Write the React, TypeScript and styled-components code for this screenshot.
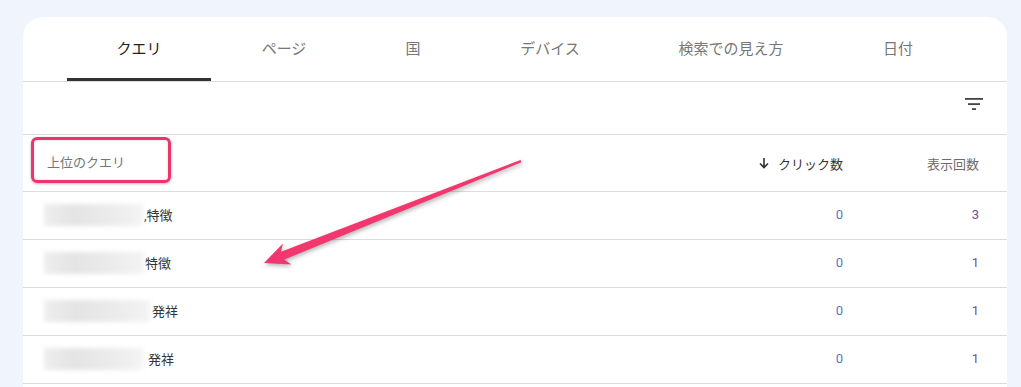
import React from "react";
import styled, { createGlobalStyle } from "styled-components";

const Global = createGlobalStyle`
  html, body { margin: 0; padding: 0; }
  body {
    background: #f0f4fc;
    font-family: Roboto, "Noto Sans CJK JP", sans-serif;
    overflow: hidden;
    width: 1021px;
    height: 387px;
  }
`;

const Page = styled.div`
  position: relative;
  width: 1021px;
  height: 387px;
  padding: 17px 0 0 23px;
  box-sizing: border-box;
  overflow: hidden;
`;

const Card = styled.div`
  width: 984px;
  height: 400px;
  background: #fff;
  border-radius: 20px 20px 0 0;
  display: flex;
  flex-direction: column;
`;

const Tabs = styled.div`
  display: flex;
  height: 65px;
  flex: none;
  padding-left: 44px;
  border-bottom: 1px solid #dadce0;
  box-sizing: border-box;
`;

const Tab = styled.div<{ $w: number; $active?: boolean }>`
  width: ${(p) => p.$w}px;
  display: flex;
  align-items: center;
  justify-content: center;
  font-size: 15px;
  color: ${(p) => (p.$active ? "#202124" : "#777")};
  position: relative;
  padding-bottom: 3px;
  box-sizing: border-box;
  &::after {
    content: "";
    display: ${(p) => (p.$active ? "block" : "none")};
    position: absolute;
    left: 0;
    right: 0;
    bottom: 0;
    height: 3px;
    background: #333;
  }
`;

const Toolbar = styled.div`
  height: 53px;
  flex: none;
  display: flex;
  align-items: flex-start;
  justify-content: flex-end;
  padding: 15px 23px 0 0;
  border-bottom: 1px solid #dadce0;
  box-sizing: border-box;
`;

const Row = styled.div<{ $h: number }>`
  display: grid;
  flex: none;
  grid-template-columns: 1fr 140px 136px;
  align-items: center;
  height: ${(p) => p.$h}px;
  padding: 0 28px 0 21px;
  border-bottom: 1px solid #dadce0;
  box-sizing: border-box;
  font-size: 13px;
  color: #333;
`;

const HeadLabel = styled.span`
  position: relative;
  margin-left: 3px;
  color: #757575;
  font-size: 13px;
  line-height: 18px;
  justify-self: start;
`;

const Annotation = styled.span`
  position: absolute;
  left: -16px;
  top: -17px;
  width: 140px;
  height: 46px;
  box-sizing: border-box;
  border: 3px solid #ee346c;
  border-radius: 6px;
  box-shadow: 0 1px 3px rgba(0, 0, 0, 0.25), inset 0 0 3px rgba(0, 0, 0, 0.15);
`;

const HeadCell = styled.span<{ $dark?: boolean }>`
  color: ${(p) => (p.$dark ? "#333" : "#6b6b6b")};
  font-size: 13px;
  display: flex;
  justify-content: flex-end;
  align-items: center;
  gap: 9px;
`;

const QueryCell = styled.div`
  display: flex;
  align-items: center;
  padding-bottom: 2px;
`;

const Blur = styled.div<{ $w: number; $gap: number }>`
  width: ${(p) => p.$w}px;
  margin-right: ${(p) => p.$gap}px;
  height: 22px;
  background: linear-gradient(90deg, #eeeeee, #e4e4e4 30%, #ececec 70%, #f4f4f4);
  filter: blur(2px);
`;

const Num = styled.span<{ $purple?: boolean }>`
  text-align: right;
  font-size: 13px;
  padding-bottom: 2px;
  color: ${(p) => (p.$purple ? "#7d4a99" : "#4a80c4")};
`;

const Overlay = styled.svg`
  position: absolute;
  left: 0;
  top: 0;
  pointer-events: none;
  filter: drop-shadow(1px 2px 2px rgba(0, 0, 0, 0.3));
`;

const tabs: [string, number][] = [
  ["クエリ", 144],
  ["ページ", 146],
  ["国", 112],
  ["デバイス", 162],
  ["検索での見え方", 200],
  ["日付", 134],
];

const rows = [
  { w: 99, gap: 1, text: ",特徴", imp: 3 },
  { w: 100, gap: 1, text: "特徴", imp: 1 },
  { w: 106, gap: 2, text: "発祥", imp: 1 },
  { w: 99, gap: 5, text: "発祥", imp: 1 },
];

export default function App() {
  return (
    <Page>
      <Global />
      <Card>
        <Tabs>
          {tabs.map(([t, w], i) => (
            <Tab key={t} $w={w} $active={i === 0}>
              {t}
            </Tab>
          ))}
        </Tabs>
        <Toolbar>
          <svg width="20" height="14" viewBox="0 0 20 14">
            <rect x="1" y="1" width="18" height="1.8" fill="#444" />
            <rect x="4" y="6.2" width="12" height="1.8" fill="#444" />
            <rect x="8" y="11.2" width="4" height="1.8" fill="#444" />
          </svg>
        </Toolbar>
        <Row $h={57}>
          <HeadLabel>
            上位のクエリ
            <Annotation />
          </HeadLabel>
          <HeadCell $dark>
            <svg width="10" height="12" viewBox="0 0 10 12">
              <path d="M5 1 V10.5 M1 6.5 L5 10.5 L9 6.5" stroke="#333" strokeWidth="1.6" fill="none" />
            </svg>
            クリック数
          </HeadCell>
          <HeadCell>表示回数</HeadCell>
        </Row>
        {rows.map((r, i) => (
          <Row key={i} $h={48}>
            <QueryCell>
              <Blur $w={r.w} $gap={r.gap} />
              <span>{r.text}</span>
            </QueryCell>
            <Num>0</Num>
            <Num $purple>{r.imp}</Num>
          </Row>
        ))}
      </Card>
      <Overlay width="1021" height="387" viewBox="0 0 1021 387">
        <polygon
          points="264,263 291.3,264.5 284.3,259.5 521.5,162.2 520.5,160 281,251.8 283,243.4"
          fill="#f2376f"
        />
      </Overlay>
    </Page>
  );
}
